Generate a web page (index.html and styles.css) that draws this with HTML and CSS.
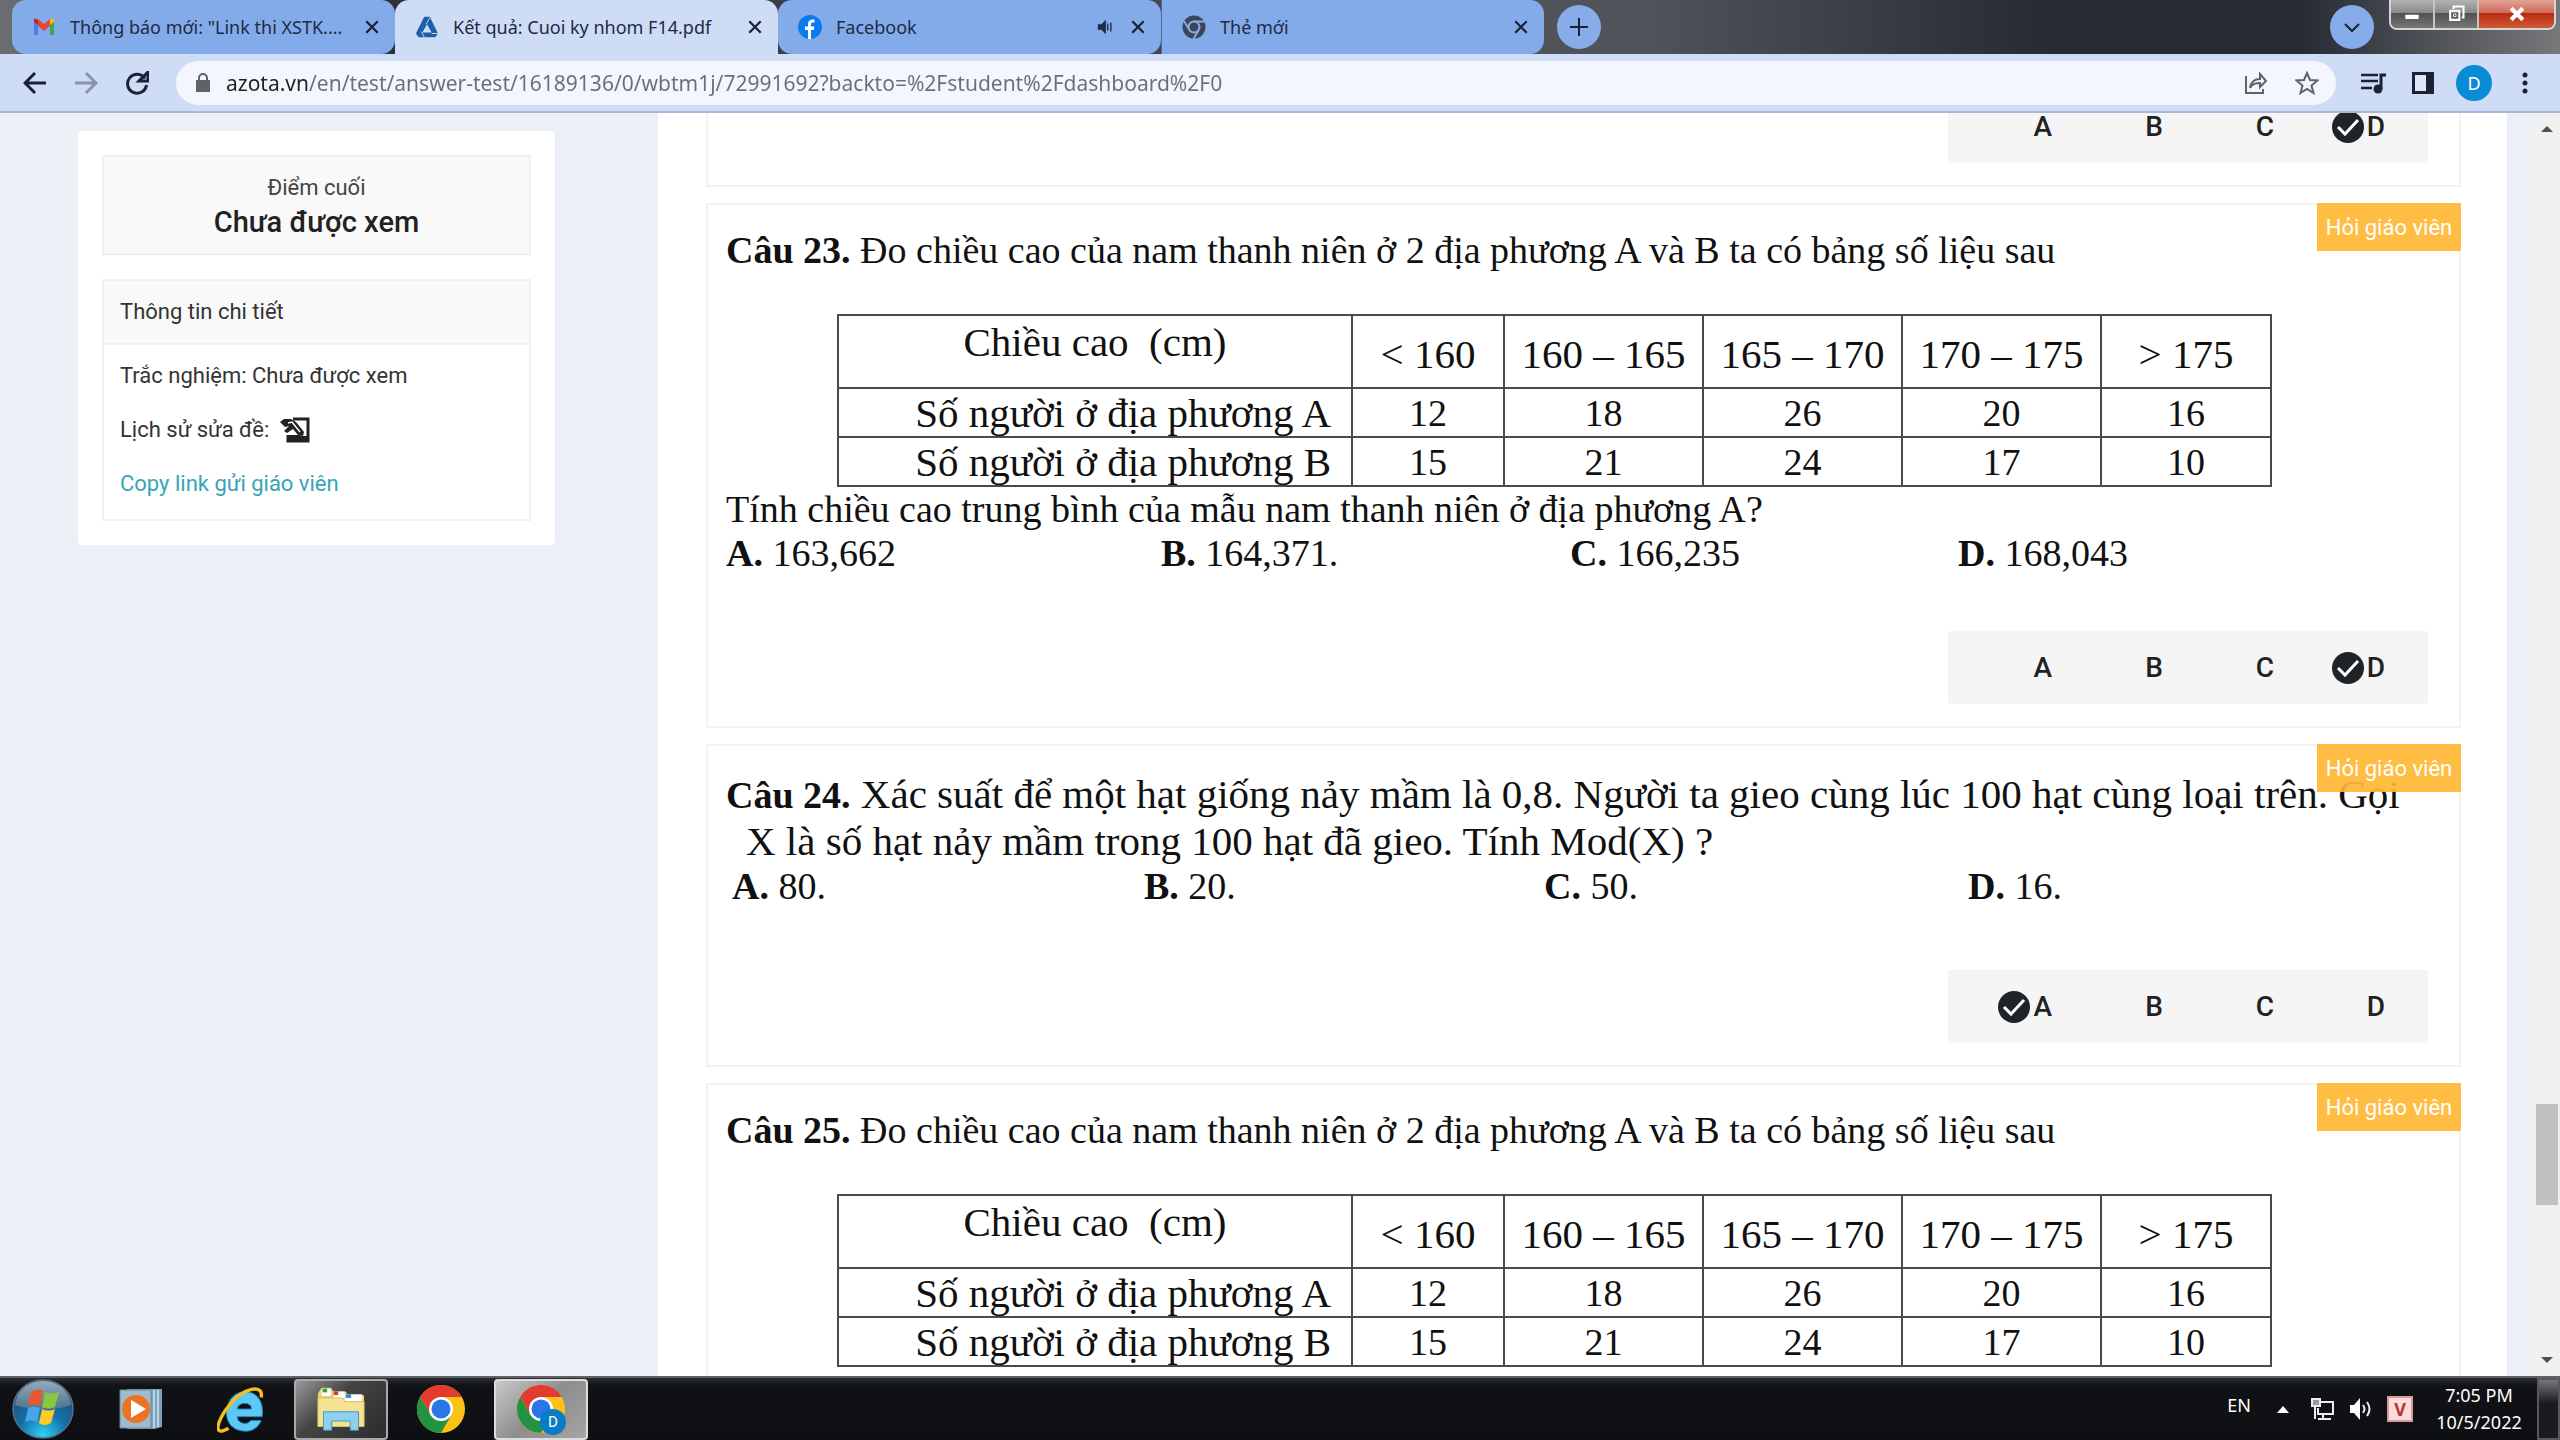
FILE: index.html
```html
<!DOCTYPE html>
<html lang="vi">
<head>
<meta charset="utf-8">
<meta name="viewport" content="width=device-width, initial-scale=1">
<title>Kết quả: Cuoi ky nhom F14.pdf</title>
<link rel="stylesheet" href="styles.css">
</head>
<body>
<header class="browser">
  <div class="tabstrip">
    <div class="tab">
      <svg class="tab-icon" viewBox="0 0 24 24"><path d="M2 6v14h4V10z" fill="#4a7fe8"/><path d="M22 6v14h-4V10z" fill="#38a852"/><path d="M18 10l4-3V5c0-1-2-2-4 0z" fill="#fbbc04"/><path d="M6 10L2 7V5c0-1 2-2 4 0z" fill="#b52a22"/><path d="M6 4l6 5 6-5v7l-6 5-6-5z" fill="#e5463a"/></svg>
      <span class="tab-title">Thông báo mới: "Link thi XSTK....</span>
      <button class="tab-close" aria-label="Close"><svg viewBox="0 0 14 14"><path d="M2 2l10 10M12 2L2 12"/></svg></button>
    </div>
    <div class="tab tab-active">
      <svg class="tab-icon tab-icon-azota" viewBox="0 0 26 24"><path d="M10 1h6l9 18-3 4H4l-3-4z" fill="#1f5fa8"/><path d="M13 9l5 9H8z" fill="#cfdcf6"/><path d="M7 17l3 6M16 2l-4 7M25 19h-7" stroke="#cfdcf6" stroke-width="1"/></svg>
      <span class="tab-title">Kết quả: Cuoi ky nhom F14.pdf</span>
      <button class="tab-close" aria-label="Close"><svg viewBox="0 0 14 14"><path d="M2 2l10 10M12 2L2 12"/></svg></button>
    </div>
    <div class="tab">
      <svg class="tab-icon" viewBox="0 0 24 24"><circle cx="12" cy="12" r="12" fill="#0a7cf0"/><path d="M10 24v-9H7v-3.500h3V9c0-3 1.800-4.600 4.500-4.600l2 .2v3h-1.500c-1.500 0-2 .8-2 1.800v2.100h3.300L15.700 15H13v9z" fill="#fff"/></svg>
      <span class="tab-title">Facebook</span>
      <svg class="tab-audio" viewBox="0 0 20 20"><path d="M2 7h4l5-5v16l-5-5H2z" fill="#1d2a44"/><path d="M13 6v8M16.500 5v10" stroke="#1d2a44" stroke-width="1.500"/></svg>
      <button class="tab-close" aria-label="Close"><svg viewBox="0 0 14 14"><path d="M2 2l10 10M12 2L2 12"/></svg></button>
    </div>
    <div class="tab tab-divided">
      <svg class="tab-icon" viewBox="0 0 24 24"><circle cx="12" cy="12" r="11.500" fill="#3b4658"/><circle cx="12" cy="12" r="5.500" fill="none" stroke="#86adea" stroke-width="2"/><path d="M12 6.500h11M7.200 14.700L2 6M16.800 14.700L11.500 24" stroke="#86adea" stroke-width="1.800"/></svg>
      <span class="tab-title">Thẻ mới</span>
      <button class="tab-close" aria-label="Close"><svg viewBox="0 0 14 14"><path d="M2 2l10 10M12 2L2 12"/></svg></button>
    </div>
    <button class="round-button" aria-label="New tab"><svg viewBox="0 0 20 20"><path d="M10 1v18M1 10h18"/></svg></button>
    <button class="round-button tab-search" aria-label="Search tabs"><svg viewBox="0 0 20 20"><path d="M3 7l7 7 7-7"/></svg></button>
    <div class="window-controls">
      <button aria-label="Minimize"><svg viewBox="0 0 24 24"><path d="M4 13h16v5H4z" fill="#fff"/></svg></button>
      <button aria-label="Restore"><svg viewBox="0 0 24 24"><path d="M9 6V3h12v13h-2M5 8h11v11H5z" fill="none" stroke="#fff" stroke-width="2.500"/><path d="M9 12h3v3H9z" fill="none" stroke="#fff"/></svg></button>
      <button class="window-close" aria-label="Close window"><svg viewBox="0 0 24 24"><path d="M5 5l14 14M19 5L5 19" stroke="#fff" stroke-width="5"/></svg></button>
    </div>
  </div>
  <div class="toolbar">
    <button class="nav-button" aria-label="Back"><svg viewBox="0 0 24 24"><path d="M23 12H3M12 2L2 12l10 10"/></svg></button>
    <button class="nav-button nav-disabled" aria-label="Forward"><svg viewBox="0 0 24 24"><path d="M1 12h20M12 2l10 10-10 10"/></svg></button>
    <button class="nav-button" aria-label="Reload"><svg viewBox="0 0 24 24"><path d="M20 7.500A9.500 9.500 0 1 0 21.500 14"/><path d="M23 1v9h-9z" fill="#1b2233" stroke="none"/></svg></button>
    <div class="omnibox">
      <svg class="lock" viewBox="0 0 14 20"><path d="M0 7h14v12H0z" fill="#5f6368"/><path d="M3 8V5a4 4 0 0 1 8 0v3" fill="none" stroke="#5f6368" stroke-width="2"/></svg>
      <input class="url" type="text" aria-label="Address" value="azota.vn/en/test/answer-test/16189136/0/wbtm1j/72991692?backto=%2Fstudent%2Fdashboard%2F0">
      <button class="box-button" aria-label="Share"><svg viewBox="0 0 24 24"><path d="M2 5v17h17v-4M6 17c1-6 4-9 10-9V3l6 7-6 6v-4c-5 0-8 1-10 5z"/></svg></button>
      <button class="box-button" aria-label="Bookmark"><svg viewBox="0 0 24 24"><path d="M12 2l3 7 7.500.5-6 5 2 7.500-6.500-4-6.500 4 2-7.500-6-5L9 9z"/></svg></button>
    </div>
    <button class="tool-button" aria-label="Media"><svg viewBox="0 0 26 24"><path d="M1 4h17M1 10h17M1 17h11" stroke="#1b2233" stroke-width="2.500"/><path d="M21 18V4h5" fill="none" stroke="#1b2233" stroke-width="3"/><circle cx="18" cy="18" r="4.500" fill="#1b2233"/></svg></button>
    <button class="tool-button" aria-label="Side panel"><svg viewBox="0 0 26 24"><path d="M2 1h22v22H2z" fill="#1b2233"/><path d="M5 4h11v16H5z" fill="#dfe8fa"/></svg></button>
    <button class="avatar" aria-label="Profile">D</button>
    <button class="tool-button menu-button" aria-label="Menu"><svg viewBox="0 0 26 24"><circle cx="13" cy="4" r="2.500" fill="#1b2233"/><circle cx="13" cy="12" r="2.500" fill="#1b2233"/><circle cx="13" cy="20" r="2.500" fill="#1b2233"/></svg></button>
  </div>
</header>

<div class="page">
  <aside class="sidebar">
    <div class="summary">
      <section class="score">
        <p class="score-label">Điểm cuối</p>
        <p class="score-value">Chưa được xem</p>
      </section>
      <section class="details">
        <h2 class="details-head">Thông tin chi tiết</h2>
        <div class="details-body">
          <p>Trắc nghiệm: Chưa được xem</p>
          <p>Lịch sử sửa đề: <svg class="history" viewBox="0 0 32 28"><path d="M14 3h15v22H9v-6" fill="none" stroke="#222" stroke-width="3"/><path d="M8 19h12l3 1h5v6H8z" fill="#222"/><path d="M5 3h7l5 3 8 10-1 4-5-1-5-6-6 4-3-2 5-5-4 1-5-5z" fill="#222"/><path d="M9 7l4-1 8 10" fill="none" stroke="#fff" stroke-width="1.500"/></svg></p>
          <p><a href="#copy">Copy link gửi giáo viên</a></p>
        </div>
      </section>
    </div>
  </aside>

  <main class="questions">
    <article class="card">
      <fieldset class="choices" aria-label="Câu 22">
        <label><input type="radio" name="q22">A</label>
        <label><input type="radio" name="q22">B</label>
        <label><input type="radio" name="q22">C</label>
        <label><input type="radio" name="q22" checked>D</label>
      </fieldset>
    </article>

    <article class="card">
      <button class="ask">Hỏi giáo viên</button>
      <div class="question">
        <p class="stem"><b>Câu 23.</b> Đo chiều cao của nam thanh niên ở 2 địa phương A và B ta có bảng số liệu sau</p>
        <table class="data">
          <colgroup><col class="col-name"><col class="col-first"><col class="col-mid"><col class="col-mid"><col class="col-mid"><col class="col-last"></colgroup>
          <tr class="head"><th>Chiều cao&nbsp; (cm)</th><td>&lt; 160</td><td>160 – 165</td><td>165 – 170</td><td>170 – 175</td><td>&gt; 175</td></tr>
          <tr><th>Số người ở địa phương A</th><td>12</td><td>18</td><td>26</td><td>20</td><td>16</td></tr>
          <tr><th>Số người ở địa phương B</th><td>15</td><td>21</td><td>24</td><td>17</td><td>10</td></tr>
        </table>
        <p>Tính chiều cao trung bình của mẫu nam thanh niên ở địa phương A?</p>
        <div class="options"><span><b>A.</b> 163,662</span><span><b>B.</b> 164,371.</span><span><b>C.</b> 166,235</span><span><b>D.</b> 168,043</span></div>
      </div>
      <fieldset class="choices" aria-label="Câu 23">
        <label><input type="radio" name="q23">A</label>
        <label><input type="radio" name="q23">B</label>
        <label><input type="radio" name="q23">C</label>
        <label><input type="radio" name="q23" checked>D</label>
      </fieldset>
    </article>

    <article class="card">
      <button class="ask">Hỏi giáo viên</button>
      <div class="question question-text">
        <p class="stem stem-large"><b>Câu 24.</b> Xác suất để một hạt giống nảy mầm là 0,8. Người ta gieo cùng lúc 100 hạt cùng loại trên. Gọi</p>
        <p class="stem stem-large stem-indent">X là số hạt nảy mầm trong 100 hạt đã gieo. Tính Mod(X) ?</p>
        <div class="options options-short"><span><b>A.</b> 80.</span><span><b>B.</b> 20.</span><span><b>C.</b> 50.</span><span><b>D.</b> 16.</span></div>
      </div>
      <fieldset class="choices" aria-label="Câu 24">
        <label><input type="radio" name="q24" checked>A</label>
        <label><input type="radio" name="q24">B</label>
        <label><input type="radio" name="q24">C</label>
        <label><input type="radio" name="q24">D</label>
      </fieldset>
    </article>

    <article class="card">
      <button class="ask">Hỏi giáo viên</button>
      <div class="question">
        <p class="stem"><b>Câu 25.</b> Đo chiều cao của nam thanh niên ở 2 địa phương A và B ta có bảng số liệu sau</p>
        <table class="data">
          <colgroup><col class="col-name"><col class="col-first"><col class="col-mid"><col class="col-mid"><col class="col-mid"><col class="col-last"></colgroup>
          <tr class="head"><th>Chiều cao&nbsp; (cm)</th><td>&lt; 160</td><td>160 – 165</td><td>165 – 170</td><td>170 – 175</td><td>&gt; 175</td></tr>
          <tr><th>Số người ở địa phương A</th><td>12</td><td>18</td><td>26</td><td>20</td><td>16</td></tr>
          <tr><th>Số người ở địa phương B</th><td>15</td><td>21</td><td>24</td><td>17</td><td>10</td></tr>
        </table>
      </div>
    </article>
  </main>

  <div class="scrollbar">
    <svg viewBox="0 0 12 7"><path d="M0 7l6-6 6 6z" fill="#505050"/></svg>
    <div class="track"><div class="thumb"></div></div>
    <svg viewBox="0 0 12 7"><path d="M0 0l6 6 6-6z" fill="#505050"/></svg>
  </div>
</div>

<footer class="taskbar">
  <button class="start" aria-label="Start">
    <svg viewBox="0 0 62 60"><defs><radialGradient id="orb" cx=".5" cy=".95" r=".9"><stop offset="0" stop-color="#2fd0f8"/><stop offset=".45" stop-color="#1470a8"/><stop offset="1" stop-color="#28466a"/></radialGradient><linearGradient id="gloss" x2="0" y2="1"><stop offset="0" stop-color="#c6d4dd"/><stop offset="1" stop-color="#5e7d92"/></linearGradient></defs><ellipse cx="31" cy="30" rx="30" ry="29" fill="url(#orb)" stroke="#52738a" stroke-width="1.500"/><path d="M3 26C5 10 18 2 31 2s26 8 28 24c-18 6-38 6-56 0z" fill="url(#gloss)" opacity=".7"/><path d="M19 13q6-4 12-1l-3 15q-6-3-12 0z" fill="#e8592a"/><path d="M33 13q6 3 14 0l-4 15q-7 3-13 0z" fill="#8cc63f"/><path d="M16 29q6-3 12 0l-3 14q-6-3-12 0z" fill="#48a6e6"/><path d="M30 30q6 3 13 0l-4 14q-7 4-12 0z" fill="#ffc928"/></svg>
  </button>
  <button class="task task-player" aria-label="Media Player">
    <svg viewBox="0 0 44 42"><path d="M8 1h35v38l-8 2H8z" fill="#7ba2bd"/><path d="M35 2v38M39 2v37" stroke="#d4e5ee" stroke-width="1.500"/><path d="M1 2h31v38H1z" fill="#9fbccd" stroke="#6787a0"/><circle cx="17" cy="21" r="14" fill="#ec7226"/><path d="M12 12l15 9-15 9z" fill="#fff"/></svg>
  </button>
  <button class="task" aria-label="Internet Explorer">
    <svg viewBox="0 0 50 50"><path d="M47 33H21c0 8 12 9 14 4h11c-3 8-11 12-18 11C15 47 9 38 10 26 12 13 21 6 31 7c12 1 18 12 16 26zM21 25h15c0-8-14-8-15 0z" fill="#5cc9f5" stroke="#1d86c4"/><path d="M46 13c3-15-19-10-33 8C3 33-3 48 4 48q3 0 8-3" fill="none" stroke="#f6be1c" stroke-width="3.500"/></svg>
  </button>
  <button class="task task-open" aria-label="Explorer">
    <svg viewBox="0 0 52 50"><path d="M1 8L5 2h10l3 4h13l3 4h17v34H1z" fill="#e8cf73"/><path d="M5 3h10v8H5zM18 6h12v7H18zM30 9h19v8H30z" fill="#fff"/><path d="M6 3h5v4H6z" fill="#29a745"/><path d="M18 6h5v4h-5z" fill="#cf4028"/><path d="M31 9h6v4h-6z" fill="#3a8bd0"/><path d="M1 13h26l3 4h21v27H1z" fill="#f5e393" stroke="#d5bd5e"/><path d="M7 28h38v20h-9V38H16v10H7z" fill="#8fd0ef" stroke="#3e94c4"/></svg>
  </button>
  <button class="task" aria-label="Chrome">
    <svg viewBox="0 0 48 48"><circle cx="24" cy="24" r="24" fill="#fbc116"/><path d="M3.200 12A24 24 0 0 1 44.800 12H24L13.600 30z" fill="#e33b2e"/><path d="M3.200 12A24 24 0 0 0 24 48L34.400 30 24 36 13.600 30z" fill="#229342"/><circle cx="24" cy="24" r="12" fill="#fff"/><circle cx="24" cy="24" r="9.500" fill="#2a75e8"/></svg>
  </button>
  <button class="task task-active" aria-label="Chrome, D">
    <svg viewBox="0 0 48 48"><circle cx="24" cy="24" r="24" fill="#fbc116"/><path d="M3.200 12A24 24 0 0 1 44.800 12H24L13.600 30z" fill="#e33b2e"/><path d="M3.200 12A24 24 0 0 0 24 48L34.400 30 24 36 13.600 30z" fill="#229342"/><circle cx="24" cy="24" r="12" fill="#fff"/><circle cx="24" cy="24" r="9.500" fill="#2a75e8"/></svg>
    <span class="task-badge">D</span>
  </button>
  <div class="tray">
    <span class="lang">EN</span>
    <svg class="tray-arrow" viewBox="0 0 12 7"><path d="M0 7l6-7 6 7z" fill="#fff"/></svg>
    <svg class="tray-icon" viewBox="0 0 24 24"><path d="M9 5h13v12H7V11" fill="none" stroke="#eee" stroke-width="2"/><path d="M1 2h8v7H1zM4 9v13M12 17v4M7 22h13" stroke="#eee" stroke-width="2" fill="#999"/></svg>
    <svg class="tray-icon" viewBox="0 0 24 24"><path d="M1 8h4l6-7v22l-6-7H1z" fill="#fff"/><path d="M14 8q3 4 0 8M18 5q5 7 0 14" fill="none" stroke="#eee" stroke-width="2"/></svg>
    <span class="unikey">V</span>
    <div class="clock"><span>7:05 PM</span><span>10/5/2022</span></div>
  </div>
  <button class="show-desktop" aria-label="Show desktop"></button>
</footer>
</body>
</html>
```
FILE: styles.css
```css
* { box-sizing: border-box; }

body {
  margin: 0;
  height: 100vh;
  display: flex;
  flex-direction: column;
  overflow: hidden;
  background: #ebeff6;
  font-family: Roboto, "Liberation Sans", sans-serif;
  color: #222;
}

button {
  margin: 0;
  padding: 0;
  border: 0;
  background: none;
  font: inherit;
  color: inherit;
}

p, h2 { margin: 0; }
svg { display: block; }

/* Browser window */
.browser { font-family: "Noto Sans", "Open Sans", sans-serif; }

.tabstrip {
  display: flex;
  align-items: flex-start;
  height: 54px;
  padding: 0 4px 0 12px;
  background: linear-gradient(90deg, #6b6d70 0, #2c3039 380px, #50545a 1545px, #50545a 1640px, #262a33 2050px, #262a33 2300px, #77787a 100%);
}

.tab {
  display: flex;
  align-items: center;
  flex: 0 0 383px;
  min-width: 0;
  height: 54px;
  padding: 0 15px 0 20px;
  border-radius: 14px;
  background: #84abe9;
  color: #1d2a44;
  font-size: 18px;
}

.tab-active {
  border-radius: 14px 14px 0 0;
  background: #cfdcf6;
}

.tab-divided {
  border-left: 1px solid #4e6a99;
  border-radius: 0 14px 14px 0;
}

.tab-icon { flex: none; width: 24px; height: 24px; margin-right: 14px; }
.tab-title { flex: 1; white-space: nowrap; overflow: hidden; }
.tab-audio { flex: none; width: 18px; height: 18px; margin-right: 16px; }
.tab-close { flex: none; width: 16px; height: 16px; }
.tab-close path { fill: none; stroke: #1b2233; stroke-width: 2; }

.round-button {
  display: grid;
  place-items: center;
  flex: none;
  width: 44px;
  height: 44px;
  margin: 5px 0 0 13px;
  border-radius: 50%;
  background: #86adea;
}
.round-button svg { width: 20px; height: 20px; }
.round-button path { fill: none; stroke: #1b2233; stroke-width: 2; }
.tab-search { margin-left: auto; }

.window-controls {
  display: flex;
  height: 30px;
  margin-left: 15px;
  border: 2px solid #d5d5d5;
  border-top: 0;
  border-radius: 0 0 8px 8px;
  overflow: hidden;
}
.window-controls button {
  display: grid;
  place-items: center;
  width: 44px;
  border-right: 2px solid #c4c4c4;
  background: linear-gradient(#b2b2b2 0, #8a8a8a 45%, #505050 46%, #777 100%);
}
.window-controls svg { width: 20px; height: 20px; }
.window-controls .window-close {
  width: 75px;
  border-right: 0;
  background: linear-gradient(#e0a397 0, #cf6a58 45%, #b62a10 46%, #d05a38 100%);
}

.toolbar {
  display: flex;
  align-items: center;
  height: 59px;
  padding: 0 22px 0 23px;
  border-bottom: 2px solid #a9b8d3;
  background: #cfdcf6;
}

.nav-button { flex: none; width: 24px; height: 24px; margin-right: 27px; }
.nav-button path { fill: none; stroke: #1b2233; stroke-width: 3; }
.nav-disabled path { stroke: #8a94a8; }

.omnibox {
  display: flex;
  align-items: center;
  flex: 1;
  height: 44px;
  padding: 0 17px 0 20px;
  border-radius: 22px;
  background: #f3f6fd;
}
.lock { width: 14px; height: 20px; }
.url {
  flex: 1;
  min-width: 0;
  margin-left: 16px;
  padding: 0;
  border: 0;
  outline: 0;
  font: 21px/40px "Noto Sans", "Open Sans", sans-serif;
  background: linear-gradient(90deg, #202124 82px, #6a6e75 82px);
  -webkit-background-clip: text;
  background-clip: text;
  -webkit-text-fill-color: transparent;
}
.box-button { width: 24px; height: 24px; margin-left: 27px; }
.box-button path { fill: none; stroke: #5f6368; stroke-width: 2; }
.tool-button { flex: none; width: 26px; height: 24px; margin-left: 24px; }
.avatar {
  flex: none;
  width: 36px;
  height: 36px;
  margin-left: 20px;
  border-radius: 50%;
  background: #0a8bd6;
  color: #fff;
  font-size: 18px;
}
.menu-button { margin-left: 20px; }

/* Web page */
.page {
  display: flex;
  flex: 1;
  min-height: 0;
  overflow: hidden;
}

.sidebar { flex: 0 0 658px; padding: 18px 103px 0 78px; }
.summary {
  display: grid;
  gap: 24px;
  padding: 24px;
  border-radius: 4px;
  background: #fff;
  font-size: 22px;
}
.score {
  padding: 14px 0;
  border: 2px solid #f0f0f0;
  background: #f9f9f9;
  text-align: center;
}
.score-label { line-height: 34px; color: #444; }
.score-value { font-size: 29px; font-weight: 500; line-height: 34px; }
.details { border: 2px solid #f0f0f0; }
.details-head {
  padding: 0 16px;
  border-bottom: 2px solid #f0f0f0;
  background: #f9f9f9;
  font-size: 22px;
  font-weight: 400;
  line-height: 62px;
  color: #333;
}
.details-body { padding: 4px 16px 8px; color: #333; }
.details-body p { display: flex; align-items: center; gap: 10px; line-height: 54px; }
.details-body a { color: #35a5b5; text-decoration: none; }
.history { width: 32px; height: 28px; }

.questions {
  display: flex;
  flex: 1;
  flex-direction: column;
  gap: 16px;
  min-width: 0;
  margin-top: -45px;
  padding: 0 46px 0 48px;
  background: #fff;
}
.card {
  position: relative;
  flex: none;
  padding: 22px 31px 22px 18px;
  border: 2px solid #f2f2f2;
}
.ask {
  position: absolute;
  top: -2px;
  right: -2px;
  width: 144px;
  height: 48px;
  background: rgba(255, 183, 51, 0.92);
  color: #fff;
  font-size: 22px;
}

.question {
  font-family: "Liberation Serif", serif;
  font-size: 38px;
  line-height: 44px;
  color: #111;
  white-space: nowrap;
}
.question-text { padding: 3px 0 6px; }
.stem { line-height: 46px; }
.stem-large { font-size: 41px; }
.stem-large b { font-size: 38px; }
.stem-indent { padding-left: 20px; }

.data {
  width: 1435px;
  margin: 41px 0 0 111px;
  border-collapse: collapse;
  table-layout: fixed;
}
.col-name { width: 514px; }
.col-first { width: 152px; }
.col-mid { width: 199px; }
.col-last { width: 170px; }
.data th, .data td {
  height: 49px;
  padding: 0;
  border: 2px solid #4a4a4a;
  font-weight: 400;
  text-align: center;
}
.data th { padding-right: 20px; font-size: 41px; text-align: right; }
.data .head td { height: 73px; padding-top: 4px; font-size: 41px; }
.data .head th { padding: 4px 0 0; text-align: center; vertical-align: top; }

.options { display: grid; grid-template-columns: 435px 409px 388px 1fr; }
.options-short { grid-template-columns: 412px 400px 424px 1fr; padding-left: 6px; }

.choices {
  display: grid;
  grid-template-columns: 104px repeat(3, 111px);
  align-items: center;
  justify-content: end;
  width: 480px;
  height: 73px;
  margin: 56px 0 0 auto;
  padding: 0 43px 0 0;
  border: 0;
  border-radius: 2px;
  background: #f5f5f5;
  font-size: 28px;
  font-weight: 500;
}
.card:first-child { padding-top: 20px; }
.card:first-child .choices { margin-top: 0; }
.choices label { display: flex; align-items: center; justify-content: end; gap: 3px; }
.choices input {
  width: 32px;
  height: 32px;
  margin: 0;
  appearance: none;
}
.choices input:checked {
  background: url("data:image/svg+xml,%3Csvg xmlns='http://www.w3.org/2000/svg' viewBox='0 0 32 32'%3E%3Ccircle cx='16' cy='16' r='16' fill='%231f2428'/%3E%3Cpath d='M6 16l7 7L26 9' fill='none' stroke='%23fff' stroke-width='3'/%3E%3C/svg%3E");
}

.scrollbar {
  display: flex;
  flex: 0 0 53px;
  flex-direction: column;
  align-items: center;
  padding: 12px 2px 12px 28px;
  background: linear-gradient(90deg, #ebeff6 25px, #f0f0f0 25px);
}
.scrollbar svg { width: 12px; height: 7px; }
.track { flex: 1; width: 22px; padding-top: 972px; }
.thumb { height: 101px; background: #c1c1c1; }

/* Taskbar */
.taskbar {
  display: flex;
  align-items: center;
  flex: none;
  height: 64px;
  border-top: 2px solid #5c6267;
  background: linear-gradient(#2b2d30 0, #111215 8px, #0e0f12 100%);
  color: #fff;
}
.start { width: 62px; height: 60px; margin: 0 20px 0 12px; }
.task {
  position: relative;
  display: grid;
  place-items: center;
  width: 94px;
  height: 61px;
  margin-right: 6px;
  border-radius: 4px;
}
.task svg { width: 48px; height: 48px; }
.task-player svg { width: 44px; height: 42px; }
.task-open { border: 2px solid #a9a9a9; background: linear-gradient(135deg, #999 0, #444 40%, #2c2c30 100%); }
.task-active { border: 2px solid #ddd; background: linear-gradient(135deg, #c9c9c9 0, #8d8d8d 50%, #a5a5a5 100%); }
.task-badge {
  position: absolute;
  right: 20px;
  bottom: 3px;
  width: 26px;
  height: 26px;
  border-radius: 50%;
  background: #0a7cc4;
  font-size: 15px;
  line-height: 26px;
}

.tray {
  display: flex;
  align-items: center;
  margin-left: auto;
  font-family: "Noto Sans", "Open Sans", sans-serif;
  font-size: 18px;
}
.lang { margin: 0 26px 8px 0; }
.tray-arrow { width: 12px; height: 7px; margin-right: 22px; }
.tray-icon { width: 24px; height: 24px; margin-right: 14px; }
.unikey {
  width: 26px;
  height: 26px;
  border: 2px solid #d99;
  background: #f9dcdc;
  color: #b7332f;
  font-weight: 700;
  line-height: 22px;
  text-align: center;
}
.clock {
  display: flex;
  flex-direction: column;
  align-items: center;
  width: 116px;
  margin-left: 8px;
  line-height: 27px;
}
.show-desktop {
  width: 23px;
  height: 62px;
  border: 2px solid #55585c;
  background: linear-gradient(#777 0, #1a1b1e 40%, #1a1b1e 100%);
}
```
